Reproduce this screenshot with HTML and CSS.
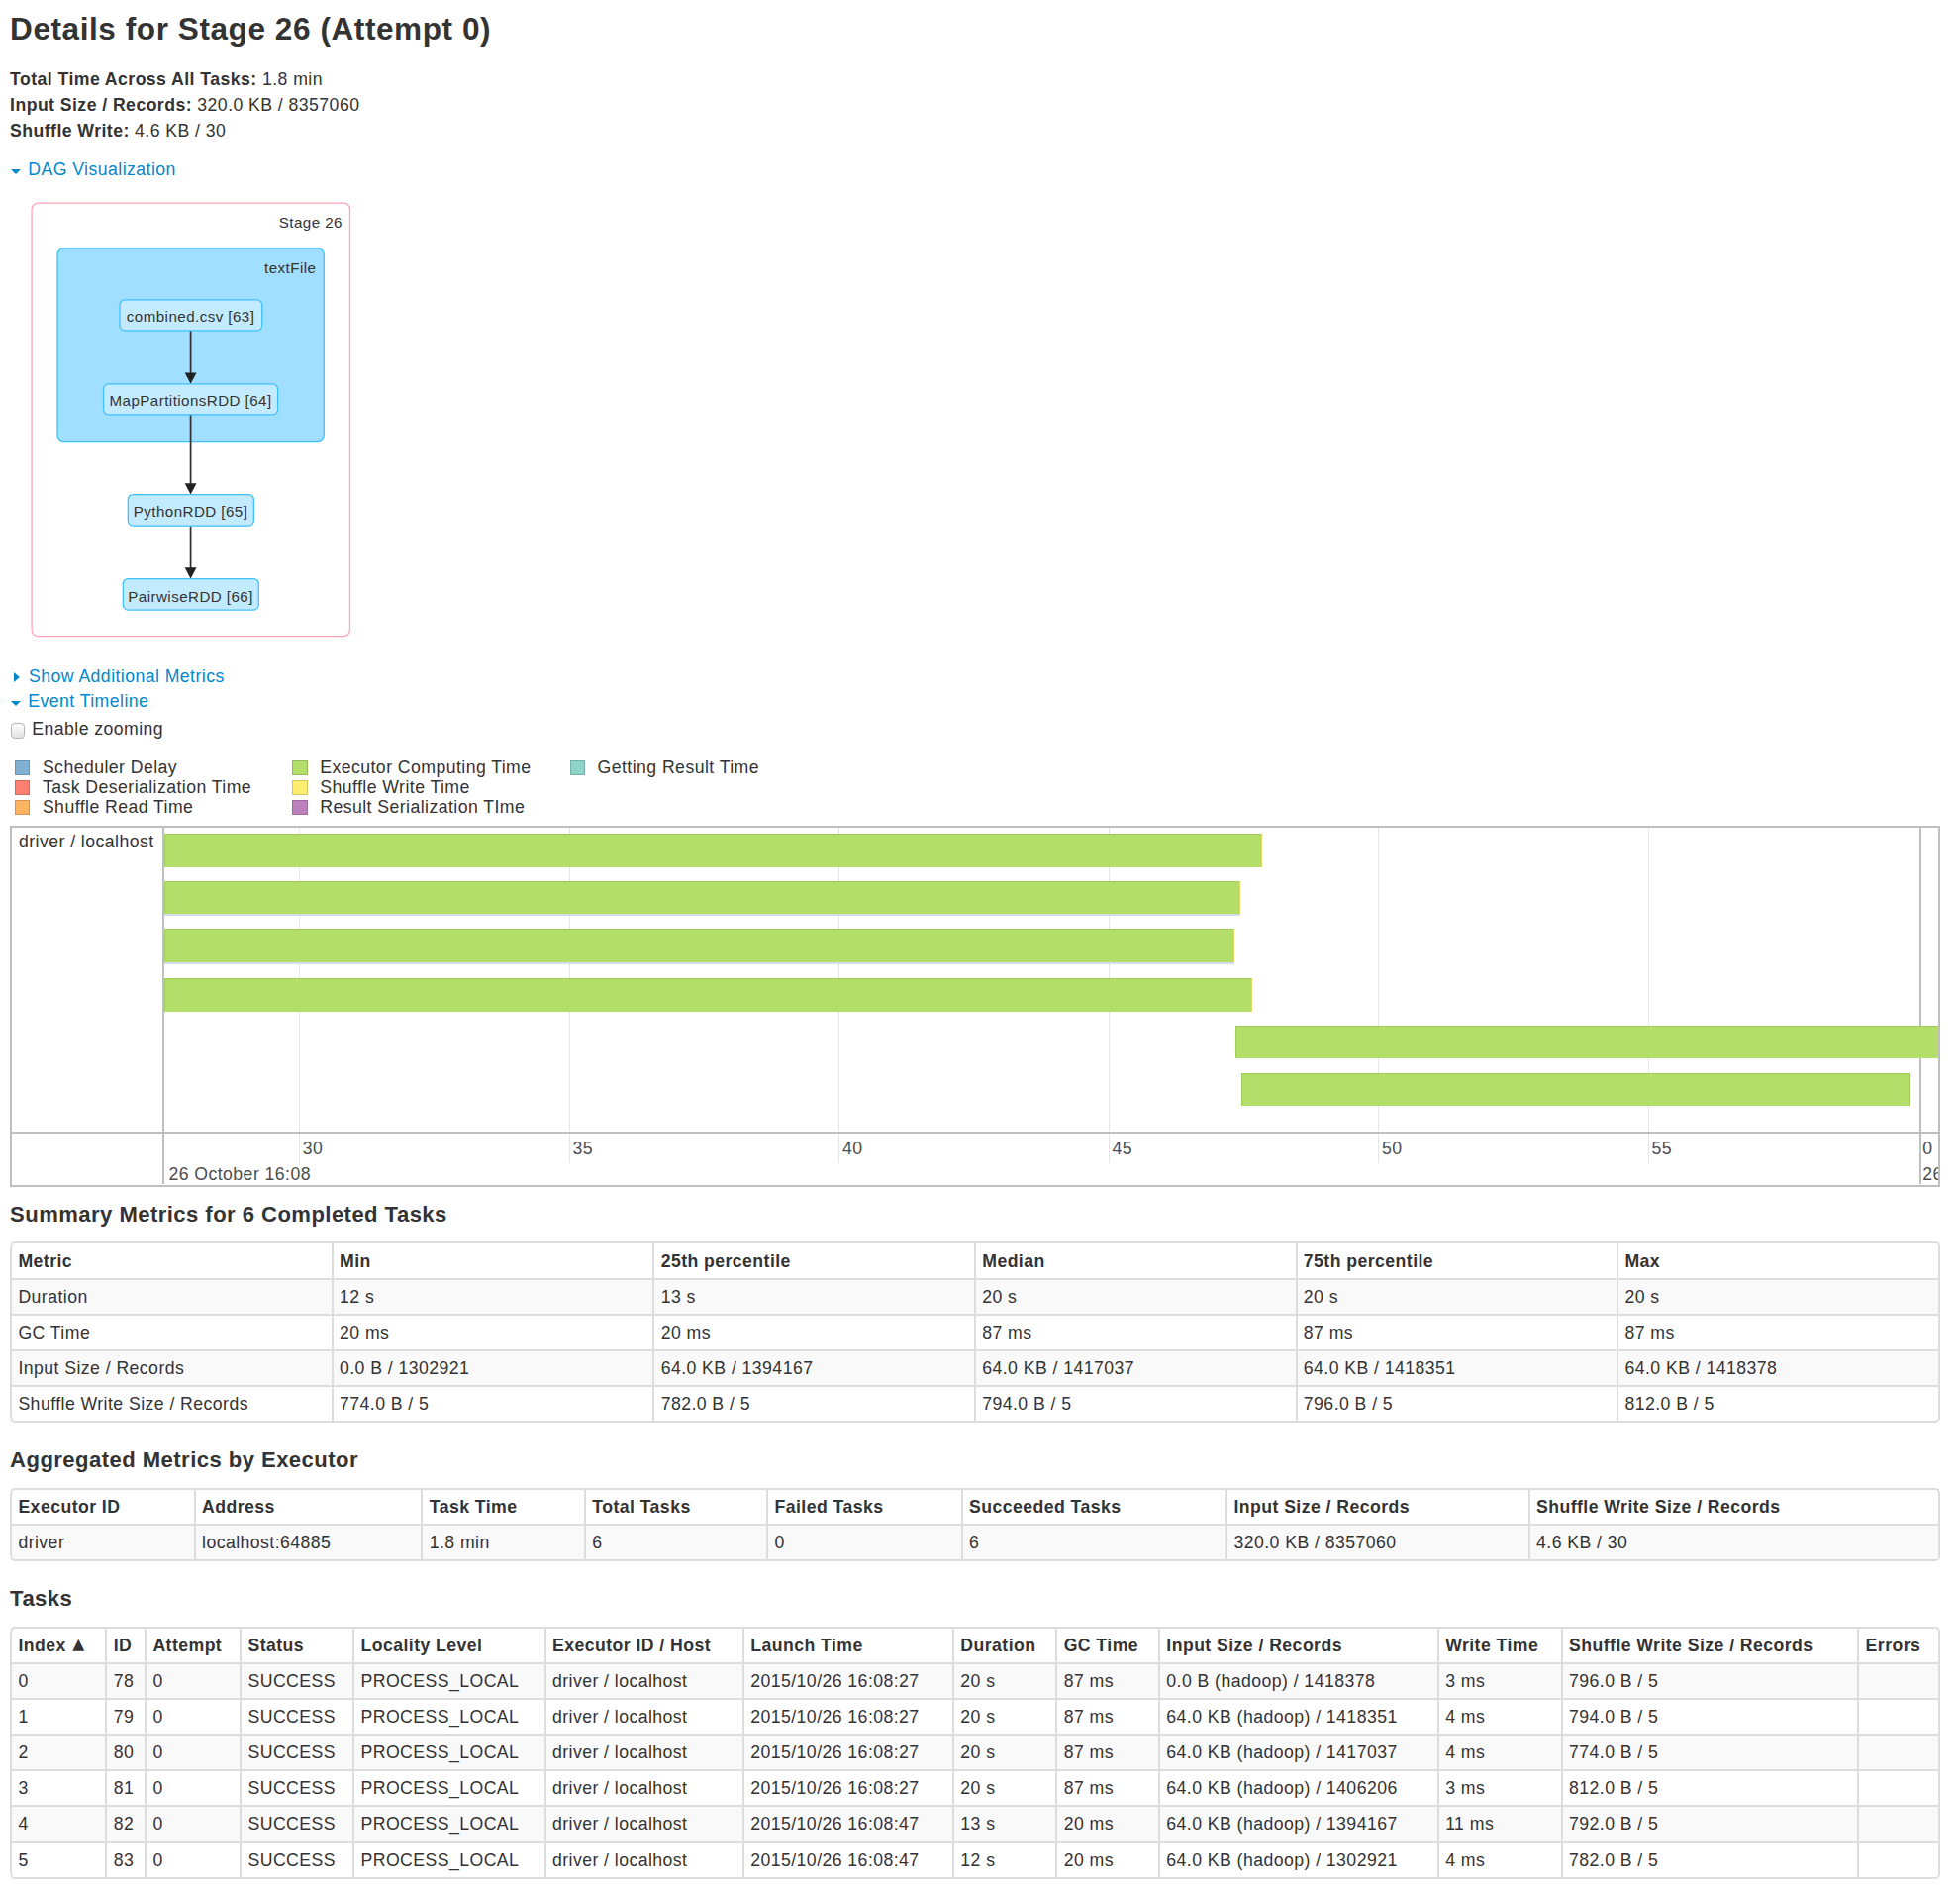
FILE: index.html
```html
<!DOCTYPE html>
<html lang="en">
<head>
<meta charset="utf-8">
<title>Details for Stage 26 (Attempt 0)</title>
<link rel="stylesheet" href="styles.css">
</head>
<body>
<h3 class="page-title">Details for Stage 26 (Attempt 0)</h3>
<ul class="summary">
  <li><strong>Total Time Across All Tasks:</strong> 1.8 min</li>
  <li><strong>Input Size / Records:</strong> 320.0 KB / 8357060</li>
  <li><strong>Shuffle Write:</strong> 4.6 KB / 30</li>
</ul>

<div class="toggle toggle-dag"><span class="arrow-open"></span><a class="link">DAG Visualization</a></div>

<svg class="dag" width="300" height="386.5" viewBox="8 145 300 386.5">
  <rect class="stage-box" x="25.5" y="162.5" width="254.5" height="346.5" rx="5"/>
  <text class="cluster-label" x="274" y="182" text-anchor="end">Stage 26</text>
  <rect class="cluster-box" x="46" y="198.8" width="213.3" height="154.2" rx="5"/>
  <text class="cluster-label" x="253" y="218.6" text-anchor="end">textFile</text>

  <line class="edge" x1="152.6" y1="264.5" x2="152.6" y2="299"/>
  <polygon class="arrowhead" points="147.9,298.3 157.3,298.3 152.6,307.2"/>
  <line class="edge" x1="152.6" y1="331.8" x2="152.6" y2="387.4"/>
  <polygon class="arrowhead" points="147.9,386.7 157.3,386.7 152.6,395.6"/>
  <line class="edge" x1="152.6" y1="420.7" x2="152.6" y2="454.7"/>
  <polygon class="arrowhead" points="147.9,454 157.3,454 152.6,462.9"/>

  <rect class="node" x="95.9" y="240" width="113.8" height="24.5" rx="4"/>
  <text class="node-label" x="152.6" y="257.4" text-anchor="middle">combined.csv [63]</text>
  <rect class="node" x="82.9" y="307.3" width="139.4" height="24.5" rx="4"/>
  <text class="node-label" x="152.6" y="324.7" text-anchor="middle">MapPartitionsRDD [64]</text>
  <rect class="node" x="102.5" y="395.7" width="100.6" height="25" rx="4"/>
  <text class="node-label" x="152.6" y="413.1" text-anchor="middle">PythonRDD [65]</text>
  <rect class="node" x="98.5" y="463" width="108.5" height="25" rx="4"/>
  <text class="node-label" x="152.6" y="481.2" text-anchor="middle">PairwiseRDD [66]</text>
</svg>

<div class="toggle"><span class="arrow-closed"></span><a class="link">Show Additional Metrics</a></div>
<div class="toggle"><span class="arrow-open"></span><a class="link">Event Timeline</a></div>
<div class="zoom-toggle"><span class="checkbox"></span>Enable zooming</div>

<div class="legend">
  <div class="legend-item"><span class="swatch sw-sched"></span>Scheduler Delay</div>
  <div class="legend-item"><span class="swatch sw-deser"></span>Task Deserialization Time</div>
  <div class="legend-item"><span class="swatch sw-read"></span>Shuffle Read Time</div>
  <div class="legend-item"><span class="swatch sw-exec"></span>Executor Computing Time</div>
  <div class="legend-item"><span class="swatch sw-write"></span>Shuffle Write Time</div>
  <div class="legend-item"><span class="swatch sw-ser"></span>Result Serialization TIme</div>
  <div class="legend-item"><span class="swatch sw-result"></span>Getting Result Time</div>
</div>

<div class="timeline">
  <div class="tl-label">driver / localhost</div>
  <div class="tl-panel">
    <span class="grid-minor" style="left:108.2px"></span>
    <span class="grid-minor" style="left:324px"></span>
    <span class="grid-minor" style="left:539.8px"></span>
    <span class="grid-minor" style="left:755.6px"></span>
    <span class="grid-minor" style="left:971.4px"></span>
    <span class="grid-minor" style="left:1187.2px"></span>
    <span class="grid-major" style="left:1404.2px"></span>
    <div class="bar bar-shuffle-end" style="left:0;top:5px;width:878.7px"></div>
    <div class="bar bar-shuffle-end bar-selected" style="left:0;top:42.8px;width:860.9px"></div>
    <div class="bar bar-shuffle-end bar-selected" style="left:0;top:81px;width:856.2px"></div>
    <div class="bar bar-shuffle-end" style="left:0;top:120.7px;width:870.4px"></div>
    <div class="bar" style="left:857px;top:158.4px;width:580px"></div>
    <div class="bar" style="left:862.1px;top:196.4px;width:534.3px"></div>
  </div>
  <div class="tl-label tl-axis-label"></div>
  <div class="tl-panel tl-axis">
    <span class="axis-minor" style="left:108.2px"></span>
    <span class="axis-minor" style="left:324px"></span>
    <span class="axis-minor" style="left:539.8px"></span>
    <span class="axis-minor" style="left:755.6px"></span>
    <span class="axis-minor" style="left:971.4px"></span>
    <span class="axis-minor" style="left:1187.2px"></span>
    <span class="axis-major" style="left:1404.2px"></span>
    <span class="tick-text" style="left:111px">30</span>
    <span class="tick-text" style="left:327px">35</span>
    <span class="tick-text" style="left:542.8px">40</span>
    <span class="tick-text" style="left:758.6px">45</span>
    <span class="tick-text" style="left:974.4px">50</span>
    <span class="tick-text" style="left:1190.2px">55</span>
    <span class="tick-text" style="left:1407px">0</span>
    <span class="major-text" style="left:3.9px">26 October 16:08</span>
    <span class="major-text" style="left:1407px">26</span>
  </div>
</div>

<h4 class="section-title first">Summary Metrics for 6 Completed Tasks</h4>
<table class="table t-summary">
  <thead>
    <tr><th>Metric</th><th>Min</th><th>25th percentile</th><th>Median</th><th>75th percentile</th><th>Max</th></tr>
  </thead>
  <tbody>
    <tr><td>Duration</td><td>12 s</td><td>13 s</td><td>20 s</td><td>20 s</td><td>20 s</td></tr>
    <tr><td>GC Time</td><td>20 ms</td><td>20 ms</td><td>87 ms</td><td>87 ms</td><td>87 ms</td></tr>
    <tr><td>Input Size / Records</td><td>0.0 B / 1302921</td><td>64.0 KB / 1394167</td><td>64.0 KB / 1417037</td><td>64.0 KB / 1418351</td><td>64.0 KB / 1418378</td></tr>
    <tr><td>Shuffle Write Size / Records</td><td>774.0 B / 5</td><td>782.0 B / 5</td><td>794.0 B / 5</td><td>796.0 B / 5</td><td>812.0 B / 5</td></tr>
  </tbody>
</table>

<h4 class="section-title">Aggregated Metrics by Executor</h4>
<table class="table t-exec">
  <thead>
    <tr><th>Executor ID</th><th>Address</th><th>Task Time</th><th>Total Tasks</th><th>Failed Tasks</th><th>Succeeded Tasks</th><th>Input Size / Records</th><th>Shuffle Write Size / Records</th></tr>
  </thead>
  <tbody>
    <tr><td>driver</td><td>localhost:64885</td><td>1.8 min</td><td>6</td><td>0</td><td>6</td><td>320.0 KB / 8357060</td><td>4.6 KB / 30</td></tr>
  </tbody>
</table>

<h4 class="section-title">Tasks</h4>
<table class="table t-tasks">
  <thead>
    <tr><th>Index <span class="sort-arrow">▴</span></th><th>ID</th><th>Attempt</th><th>Status</th><th>Locality Level</th><th>Executor ID / Host</th><th>Launch Time</th><th>Duration</th><th>GC Time</th><th>Input Size / Records</th><th>Write Time</th><th>Shuffle Write Size / Records</th><th>Errors</th></tr>
  </thead>
  <tbody>
    <tr><td>0</td><td>78</td><td>0</td><td>SUCCESS</td><td>PROCESS_LOCAL</td><td>driver / localhost</td><td>2015/10/26 16:08:27</td><td>20 s</td><td>87 ms</td><td>0.0 B (hadoop) / 1418378</td><td>3 ms</td><td>796.0 B / 5</td><td></td></tr>
    <tr><td>1</td><td>79</td><td>0</td><td>SUCCESS</td><td>PROCESS_LOCAL</td><td>driver / localhost</td><td>2015/10/26 16:08:27</td><td>20 s</td><td>87 ms</td><td>64.0 KB (hadoop) / 1418351</td><td>4 ms</td><td>794.0 B / 5</td><td></td></tr>
    <tr><td>2</td><td>80</td><td>0</td><td>SUCCESS</td><td>PROCESS_LOCAL</td><td>driver / localhost</td><td>2015/10/26 16:08:27</td><td>20 s</td><td>87 ms</td><td>64.0 KB (hadoop) / 1417037</td><td>4 ms</td><td>774.0 B / 5</td><td></td></tr>
    <tr><td>3</td><td>81</td><td>0</td><td>SUCCESS</td><td>PROCESS_LOCAL</td><td>driver / localhost</td><td>2015/10/26 16:08:27</td><td>20 s</td><td>87 ms</td><td>64.0 KB (hadoop) / 1406206</td><td>3 ms</td><td>812.0 B / 5</td><td></td></tr>
    <tr><td>4</td><td>82</td><td>0</td><td>SUCCESS</td><td>PROCESS_LOCAL</td><td>driver / localhost</td><td>2015/10/26 16:08:47</td><td>13 s</td><td>20 ms</td><td>64.0 KB (hadoop) / 1394167</td><td>11 ms</td><td>792.0 B / 5</td><td></td></tr>
    <tr><td>5</td><td>83</td><td>0</td><td>SUCCESS</td><td>PROCESS_LOCAL</td><td>driver / localhost</td><td>2015/10/26 16:08:47</td><td>12 s</td><td>20 ms</td><td>64.0 KB (hadoop) / 1302921</td><td>4 ms</td><td>782.0 B / 5</td><td></td></tr>
  </tbody>
</table>
</body>
</html>
```

FILE: styles.css
```css
html {
  zoom: 1.2628;
}

body {
  margin: 0;
  padding: 0 16px 0 8px;
  font-family: "Liberation Sans", Arial, Helvetica, sans-serif;
  font-size: 14px;
  line-height: 20px;
  color: #333;
  letter-spacing: 0.025em;
  background: #fff;
}

.page-title {
  margin: 0;
  padding-top: 3px;
  font-size: 25px;
  line-height: 40px;
  font-weight: bold;
  letter-spacing: 0.0175em;
}

.summary {
  list-style: none;
  margin: 10.2px 0 0;
  padding: 0;
}

.summary li {
  line-height: 20.7px;
}

.link {
  color: #0088cc;
  text-decoration: none;
  cursor: pointer;
}

.toggle {
  display: flex;
  align-items: center;
  line-height: 20px;
}

.toggle-dag {
  margin-top: 10.5px;
}

.arrow-open {
  width: 0;
  height: 0;
  border-left: 4.2px solid transparent;
  border-right: 4.2px solid transparent;
  border-top: 4.6px solid #0088cc;
  margin: 3px 5.6px 0 0.9px;
}

.arrow-closed {
  width: 0;
  height: 0;
  border-top: 4.7px solid transparent;
  border-bottom: 4.7px solid transparent;
  border-left: 5px solid #0088cc;
  margin: 0 7px 0 3.3px;
}

.dag {
  display: block;
  margin-top: -0.8px;
}

.stage-box {
  fill: #ffffff;
  stroke: #ffa3b5;
  stroke-width: 1;
}

.cluster-box {
  fill: #a0dfff;
  stroke: #3ec0ff;
  stroke-width: 1;
}

.cluster-label {
  font-size: 12px;
  fill: #333;
}

.node {
  fill: #c3ebff;
  stroke: #3ec0ff;
  stroke-width: 1;
}

.node-label {
  font-size: 12px;
  fill: #333;
}

.edge {
  stroke: #333;
  stroke-width: 1.4;
}

.arrowhead {
  fill: #222;
}

.zoom-toggle {
  display: flex;
  align-items: center;
  line-height: 20px;
  margin-top: 1.5px;
}

.checkbox {
  box-sizing: border-box;
  width: 11px;
  height: 12.5px;
  border: 1px solid #b4b4b4;
  border-radius: 3px;
  background: linear-gradient(#fdfdfd, #e2e2e2);
  margin: 3px 6px 0 0.6px;
}

.legend {
  margin-top: 13.5px;
  padding-left: 4px;
  display: grid;
  grid-template-rows: repeat(3, 15.8px);
  grid-template-columns: repeat(3, 222px);
  grid-auto-flow: column;
  line-height: 15.8px;
}

.legend-item {
  display: flex;
  align-items: flex-start;
  white-space: nowrap;
}

.swatch {
  box-sizing: border-box;
  width: 12px;
  height: 12px;
  border: 1px solid;
  margin: 1.5px 10px 0 0;
  flex: none;
}

.sw-sched { background: #80b1d3; border-color: #6b94b0; }
.sw-deser { background: #fb8072; border-color: #d26b5f; }
.sw-read { background: #fdb462; border-color: #d39651; }
.sw-exec { background: #b3de69; border-color: #95b957; }
.sw-write { background: #ffed6f; border-color: #d5c65c; }
.sw-ser { background: #bc80bd; border-color: #9d6b9e; }
.sw-result { background: #8dd3c7; border-color: #75b0a6; }

.timeline {
  margin-top: 6.6px;
  box-sizing: border-box;
  height: 289px;
  border: 2px solid #bfbfbf;
  display: grid;
  grid-template-columns: 121.5px 1fr;
  grid-template-rows: 243px 42px;
  color: #4d4d4d;
}

.tl-label {
  border-right: 2px solid #bfbfbf;
  padding: 1.6px 0 0 5.5px;
  white-space: nowrap;
  overflow: hidden;
  color: #333;
}

.tl-panel {
  position: relative;
  overflow: hidden;
}

.tl-axis-label,
.tl-axis {
  border-top: 2px solid #bfbfbf;
}

.grid-minor {
  position: absolute;
  top: 0;
  bottom: 0;
  width: 1px;
  background: #e5e5e5;
}

.grid-major {
  position: absolute;
  top: 0;
  bottom: 0;
  width: 2px;
  background: #bfbfbf;
}

.axis-minor {
  position: absolute;
  top: 0;
  height: 23.5px;
  width: 1px;
  background: #e5e5e5;
}

.axis-major {
  position: absolute;
  top: 0;
  bottom: 0;
  width: 2px;
  background: #bfbfbf;
}

.tick-text {
  position: absolute;
  top: 2.6px;
  white-space: nowrap;
}

.major-text {
  position: absolute;
  top: 22.8px;
  white-space: nowrap;
}

.bar {
  position: absolute;
  box-sizing: border-box;
  height: 26.4px;
  background: #b3de69;
  border: 1px solid #9fcd58;
  border-bottom-color: #b3de69;
}

.bar-shuffle-end {
  border-right: 1.2px solid #e6da63;
}

.bar-selected {
  box-shadow: 0 1.6px 0 #d4dcea;
}

.section-title {
  margin: 0 0 12.6px;
  font-size: 17.5px;
  line-height: 20px;
  font-weight: bold;
}

.section-title.first {
  margin-top: 11.6px;
  margin-bottom: 12.4px;
}

.table {
  width: 100%;
  table-layout: fixed;
  border-collapse: separate;
  border-spacing: 0;
  border: 1.6px solid #dddddd;
  border-left: 0;
  border-radius: 4px;
  margin: 0 0 19.6px;
}

.table th,
.table td {
  box-sizing: border-box;
  padding: 4px 5px;
  line-height: 19px;
  text-align: left;
  vertical-align: top;
  border-left: 1.6px solid #dddddd;
  border-top: 1.6px solid #dddddd;
  white-space: nowrap;
  overflow: hidden;
}

.table th {
  font-weight: bold;
}

.table thead tr:first-child th {
  border-top: 0;
}

.table thead tr:first-child th:first-child {
  border-top-left-radius: 4px;
}

.table tbody tr:last-child td:first-child {
  border-bottom-left-radius: 4px;
}

.table tbody tr:nth-child(odd) td {
  background: #f9f9f9;
}

.t-summary th {
  width: 16.666%;
}

.t-exec th:nth-child(1) { width: 147px; }
.t-exec th:nth-child(2) { width: 181.9px; }
.t-exec th:nth-child(3) { width: 130.3px; }
.t-exec th:nth-child(4) { width: 145.9px; }
.t-exec th:nth-child(5) { width: 155.6px; }
.t-exec th:nth-child(6) { width: 211.8px; }
.t-exec th:nth-child(7) { width: 242px; }

.t-tasks th:nth-child(1) { width: 76.3px; }
.t-tasks th:nth-child(2) { width: 31.4px; }
.t-tasks th:nth-child(3) { width: 76.1px; }
.t-tasks th:nth-child(4) { width: 90.3px; }
.t-tasks th:nth-child(5) { width: 153.2px; }
.t-tasks th:nth-child(6) { width: 158.6px; }
.t-tasks th:nth-child(7) { width: 168px; }
.t-tasks th:nth-child(8) { width: 82.6px; }
.t-tasks th:nth-child(9) { width: 82.1px; }
.t-tasks th:nth-child(10) { width: 223.2px; }
.t-tasks th:nth-child(11) { width: 98.9px; }
.t-tasks th:nth-child(12) { width: 237.2px; }

.sort-arrow {
  display: inline-block;
  font-family: "DejaVu Sans", sans-serif;
  font-size: 19px;
  line-height: 10px;
  letter-spacing: 0;
  margin-left: 1px;
}
```
